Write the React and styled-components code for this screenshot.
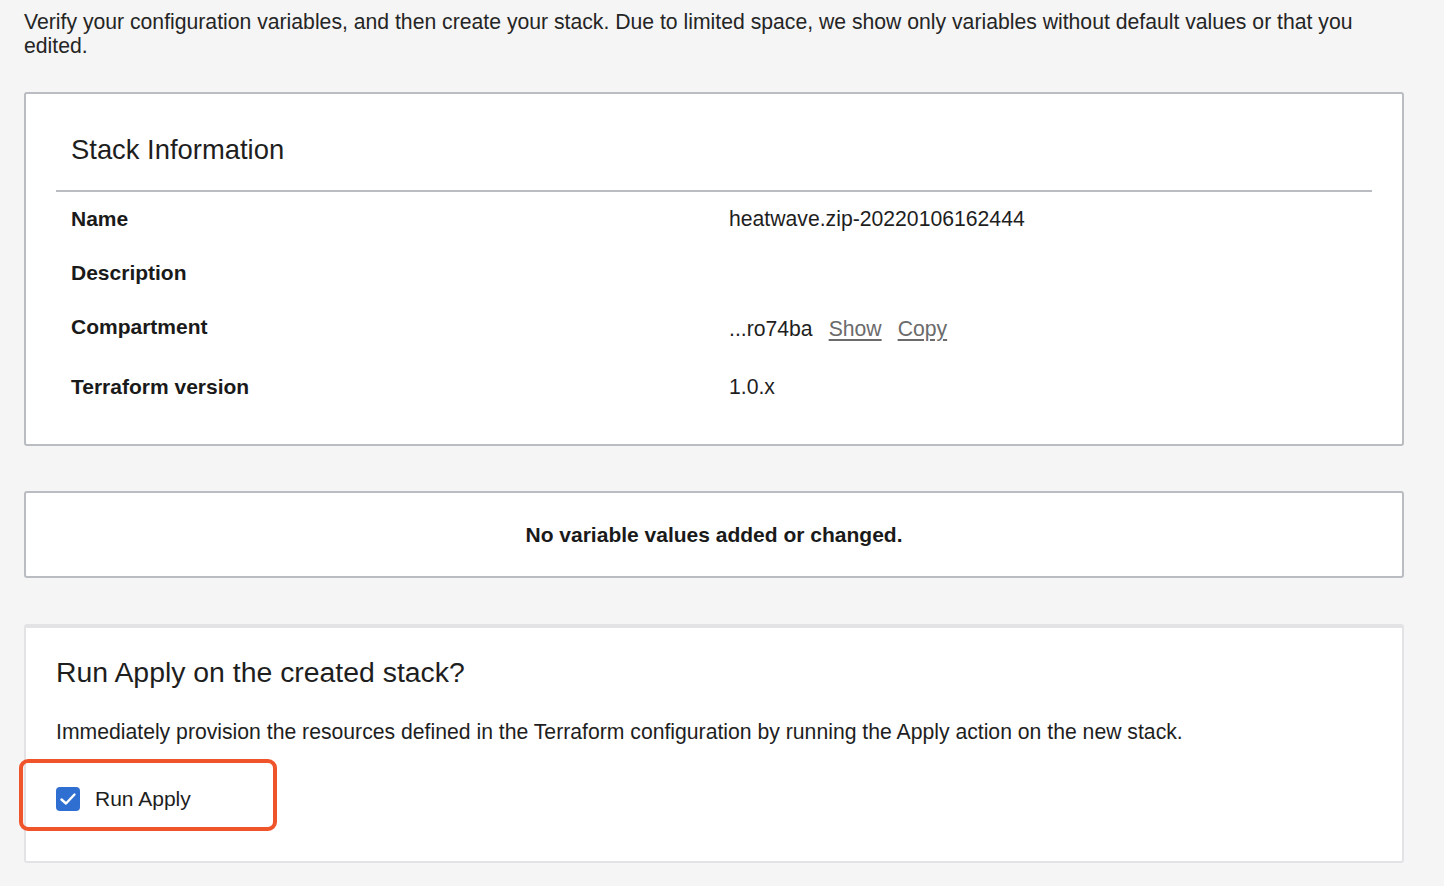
import React from 'react';
import styled, { createGlobalStyle } from 'styled-components';

const GlobalStyle = createGlobalStyle`
  body {
    margin: 0;
    background: #f5f5f5;
    font-family: "Liberation Sans", Arial, sans-serif;
    color: #161513;
  }
`;

const Page = styled.div`
  padding: 10px 40px 24px 24px;
`;

const Intro = styled.p`
  margin: 0 0 34px;
  font-size: 21.2px;
  line-height: 24px;
  color: #252525;
`;

const Card = styled.section`
  background: #fff;
  border: 2px solid ${p => (p.light ? '#e3e3e6' : '#b9bcc0')};
  border-top-width: ${p => (p.light ? '4px' : '2px')};
  border-radius: 3px;
  margin-bottom: ${p => p.gap || '0'};
  padding: ${p => p.pad || '0'};
`;

const InfoHead = styled.h2`
  margin: 0;
  padding: 38px 15px 22px;
  font-size: 27.4px;
  font-weight: 400;
  line-height: 36px;
  border-bottom: 2px solid #b9bcc0;
  color: #1e1e1e;
`;

const Rows = styled.div`
  display: grid;
  grid-template-columns: 658px 1fr;
  padding: 14px 15px 44px;
`;

const Label = styled.div`
  font-size: 21px;
  font-weight: 700;
  height: ${p => p.h}px;
  line-height: 26px;
  color: #1a1a1a;
`;

const Value = styled.div`
  font-size: 21.2px;
  height: ${p => p.h}px;
  line-height: ${p => (p.lift ? '30px' : '26px')};
  color: #1e1e1e;
  display: flex;
  gap: 16px;
`;

const Link = styled.a`
  color: #6b6b6b;
  text-decoration: underline;
  text-underline-offset: 3px;
  cursor: pointer;
`;

const Empty = styled.div`
  height: 83px;
  display: flex;
  align-items: center;
  justify-content: center;
  font-size: 21px;
  font-weight: 700;
  color: #1a1a1a;
`;

const ApplyTitle = styled.h2`
  margin: 0;
  font-size: 28.4px;
  font-weight: 400;
  line-height: 32px;
  color: #1e1e1e;
`;

const ApplyText = styled.p`
  margin: 32px 0 0;
  font-size: 21.2px;
  line-height: 24px;
  color: #1e1e1e;
`;

const CheckRow = styled.label`
  position: relative;
  display: flex;
  align-items: center;
  gap: 15px;
  height: 24px;
  margin-top: 43px;
  font-size: 21px;
  color: #1e1e1e;
`;

const Box = styled.span`
  width: 24px;
  height: 24px;
  border-radius: 4px;
  background: #2f6fd1;
  display: flex;
  align-items: center;
  justify-content: center;
  flex-shrink: 0;
`;

const Highlight = styled.span`
  position: absolute;
  left: -37px;
  top: -28px;
  width: 258px;
  height: 72px;
  border: 4px solid #f0542b;
  border-radius: 9px;
  box-sizing: border-box;
  pointer-events: none;
`;

const rows = [
  { label: 'Name', value: 'heatwave.zip-20220106162444', h: 54 },
  { label: 'Description', value: '', h: 54 },
  { label: 'Compartment', value: '...ro74ba', links: true, h: 60 },
  { label: 'Terraform version', value: '1.0.x', h: 26 },
];

export default function App() {
  return (
    <>
      <GlobalStyle />
      <Page>
        <Intro>
          Verify your configuration variables, and then create your stack. Due to limited space, we show only variables without default values or that you edited.
        </Intro>

        <Card gap="45px" pad="0 30px">
          <InfoHead>Stack Information</InfoHead>
          <Rows>
            {rows.map(r => (
              <React.Fragment key={r.label}>
                <Label h={r.h}>{r.label}</Label>
                <Value h={r.h} lift={r.links}>
                  {r.value}
                  {r.links && (
                    <>
                      <Link>Show</Link>
                      <Link>Copy</Link>
                    </>
                  )}
                </Value>
              </React.Fragment>
            ))}
          </Rows>
        </Card>

        <Card gap="46px">
          <Empty>No variable values added or changed.</Empty>
        </Card>

        <Card light pad="28px 30px 50px 30px">
          <ApplyTitle>Run Apply on the created stack?</ApplyTitle>
          <ApplyText>
            Immediately provision the resources defined in the Terraform configuration by running the Apply action on the new stack.
          </ApplyText>
          <CheckRow>
            <Box>
              <svg width="22" height="22" viewBox="0 0 22 22">
                <path d="M4.5 11.5 L9 15.5 L17.5 6.5" fill="none" stroke="#fff" strokeWidth="2.4" strokeLinecap="round" strokeLinejoin="round" />
              </svg>
            </Box>
            Run Apply
            <Highlight />
          </CheckRow>
        </Card>
      </Page>
    </>
  );
}
